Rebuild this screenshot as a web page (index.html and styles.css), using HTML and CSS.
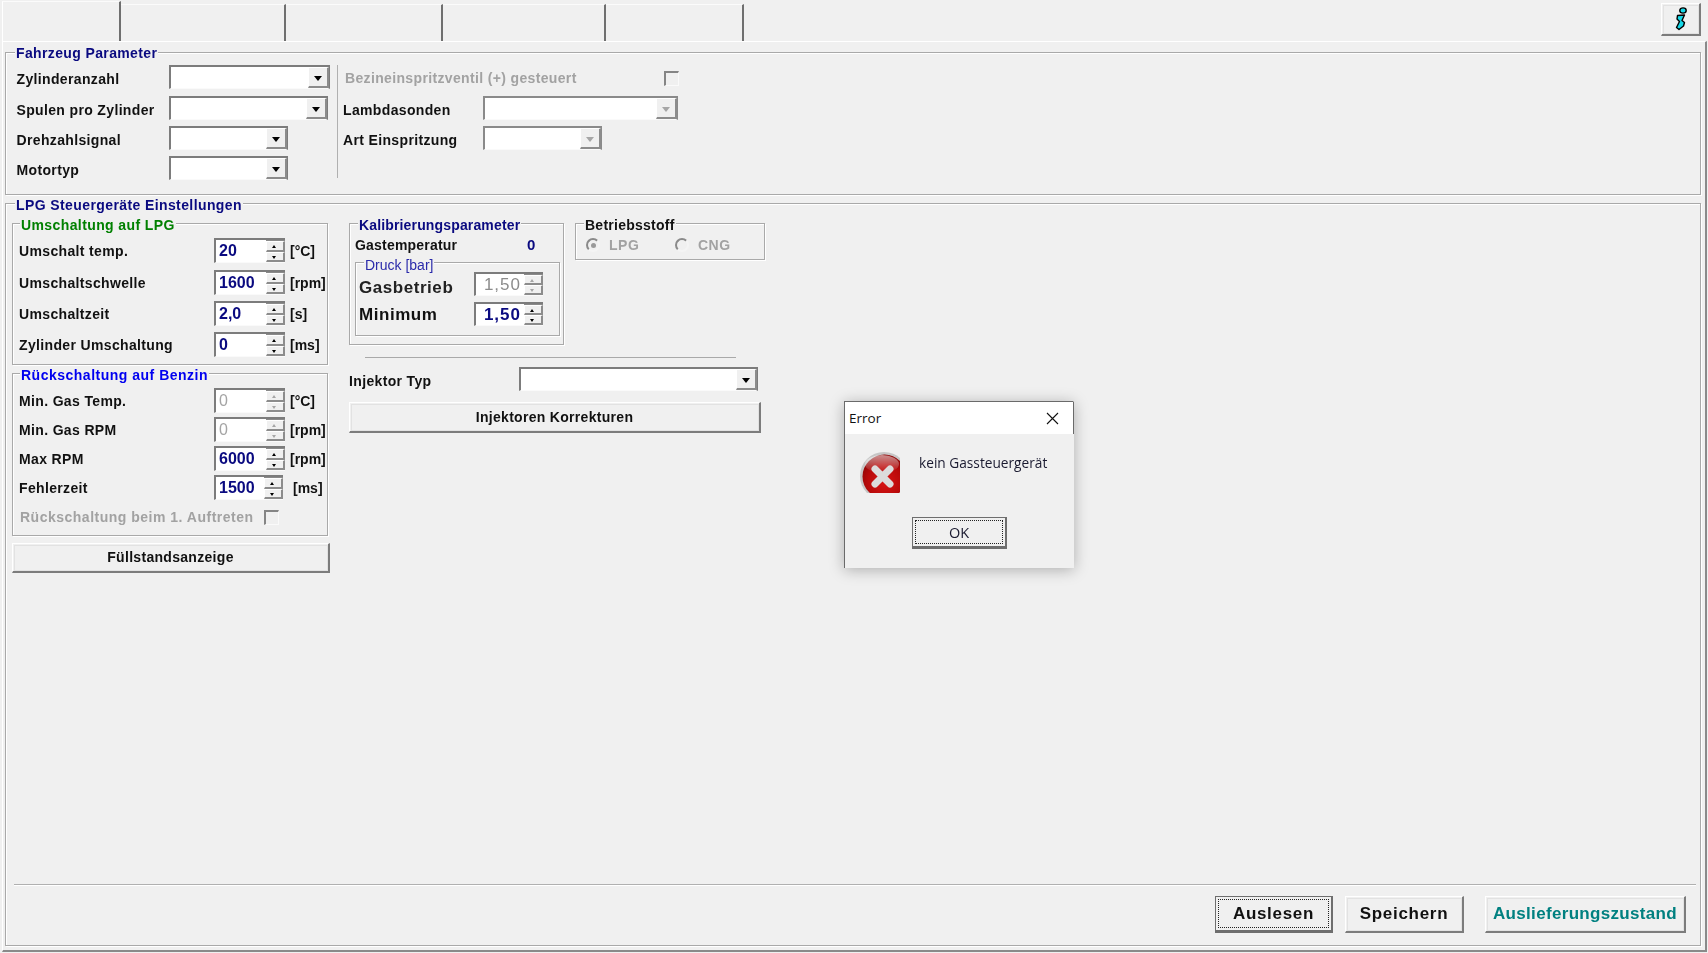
FILE: index.html
```html
<!DOCTYPE html>
<html lang="de">
<head>
<meta charset="utf-8">
<title>LPG Steuergerät</title>
<link rel="stylesheet" href="styles.css">
</head>
<body>
<div class="app">
  <div class="tabbar">
    <div class="tab tab-active tab-w1"></div>
    <div class="tab tab-w2"></div>
    <div class="tab tab-w3"></div>
    <div class="tab tab-w4"></div>
    <div class="tab tab-w5"></div>
    <button class="btn info-btn" type="button">
      <svg width="14" height="24" viewBox="0 0 14 24"><ellipse cx="9" cy="3.5" rx="3.2" ry="2.6" fill="#16d8e8" stroke="#000" stroke-width="1.4"/><path d="M3.5 8.5 L10.5 8 L8 13.5 L10.5 15.5 L9.5 19 L5 22.5 L2.5 20.5 L5.5 14.5 L3 12 Z" fill="#16d8e8" stroke="#000" stroke-width="1.4" stroke-linejoin="round"/></svg>
    </button>
  </div>

  <div class="page">
    <section class="group vehicle">
      <h2 class="legend legend-navy legend-main">Fahrzeug Parameter</h2>
      <div class="vehicle-left">
        <div class="row row-v"><span class="lbl lbl-v">Zylinderanzahl</span><div class="combo w161"><span class="arrow"></span></div></div>
        <div class="row row-v"><span class="lbl lbl-v">Spulen pro Zylinder</span><div class="combo w159"><span class="arrow"></span></div></div>
        <div class="row row-v"><span class="lbl lbl-v">Drehzahlsignal</span><div class="combo w119"><span class="arrow"></span></div></div>
        <div class="row row-v"><span class="lbl lbl-v">Motortyp</span><div class="combo w119"><span class="arrow"></span></div></div>
      </div>
      <div class="vehicle-right">
        <div class="row row-v"><span class="lbl lbl-benz off">Bezineinspritzventil (+) gesteuert</span><span class="check check-benz"></span></div>
        <div class="row row-v"><span class="lbl lbl-r">Lambdasonden</span><div class="combo w195 disabled"><span class="arrow"></span></div></div>
        <div class="row row-v"><span class="lbl lbl-r">Art Einspritzung</span><div class="combo w119 disabled"><span class="arrow"></span></div></div>
      </div>
    </section>

    <section class="group lpg">
      <h2 class="legend legend-navy legend-lpg">LPG Steuergeräte Einstellungen</h2>
      <div class="lpg-main">
        <div class="col-left">
          <section class="group box-a">
            <h3 class="legend legend-sub legend-green">Umschaltung auf LPG</h3>
            <div class="row row-s r32"><span class="lbl lbl-s">Umschalt temp.</span><div class="spin"><span class="val">20</span><span class="ud"><i class="up"></i><i class="dn"></i></span></div><span class="unit">[°C]</span></div>
            <div class="row row-s r31"><span class="lbl lbl-s">Umschaltschwelle</span><div class="spin"><span class="val">1600</span><span class="ud"><i class="up"></i><i class="dn"></i></span></div><span class="unit">[rpm]</span></div>
            <div class="row row-s r31"><span class="lbl lbl-s">Umschaltzeit</span><div class="spin"><span class="val">2,0</span><span class="ud"><i class="up"></i><i class="dn"></i></span></div><span class="unit">[s]</span></div>
            <div class="row row-s"><span class="lbl lbl-s">Zylinder Umschaltung</span><div class="spin"><span class="val">0</span><span class="ud"><i class="up"></i><i class="dn"></i></span></div><span class="unit">[ms]</span></div>
          </section>
          <section class="group box-b">
            <h3 class="legend legend-sub legend-blue">Rückschaltung auf Benzin</h3>
            <div class="row row-s r29"><span class="lbl lbl-s">Min. Gas Temp.</span><div class="spin disabled"><span class="val">0</span><span class="ud"><i class="up"></i><i class="dn"></i></span></div><span class="unit">[°C]</span></div>
            <div class="row row-s r29"><span class="lbl lbl-s">Min. Gas RPM</span><div class="spin disabled"><span class="val">0</span><span class="ud"><i class="up"></i><i class="dn"></i></span></div><span class="unit">[rpm]</span></div>
            <div class="row row-s r29"><span class="lbl lbl-s">Max RPM</span><div class="spin"><span class="val">6000</span><span class="ud"><i class="up"></i><i class="dn"></i></span></div><span class="unit">[rpm]</span></div>
            <div class="row row-s"><span class="lbl lbl-s">Fehlerzeit</span><div class="spin spin-narrow"><span class="val">1500</span><span class="ud"><i class="up"></i><i class="dn"></i></span></div><span class="unit unit-far">[ms]</span></div>
            <div class="row row-check"><span class="lbl lbl-c off">Rückschaltung beim 1. Auftreten</span><span class="check"></span></div>
          </section>
          <button class="btn wide-btn fill-btn" type="button">Füllstandsanzeige</button>
        </div>

        <div class="col-mid">
          <div class="mid-top">
            <section class="group box-k">
              <h3 class="legend legend-sub legend-navy legend-k">Kalibrierungsparameter</h3>
              <div class="gas-row"><span class="lbl">Gastemperatur</span><span class="gas-val">0</span></div>
              <section class="group box-d">
                <h4 class="legend legend-thin">Druck [bar]</h4>
                <div class="row row-d"><span class="lbl lbl-d lbl-semi">Gasbetrieb</span><div class="spin spin-d disabled"><span class="val">1,50</span><span class="ud"><i class="up"></i><i class="dn"></i></span></div></div>
                <div class="row row-d"><span class="lbl lbl-d">Minimum</span><div class="spin spin-d"><span class="val">1,50</span><span class="ud"><i class="up"></i><i class="dn"></i></span></div></div>
              </section>
            </section>
            <section class="group box-f">
              <h3 class="legend legend-sub legend-black legend-k">Betriebsstoff</h3>
              <div class="radios">
                <span class="radio radio-on"></span><span class="radio-lbl off">LPG</span>
                <span class="radio radio-2"></span><span class="radio-lbl off">CNG</span>
              </div>
            </section>
          </div>
          <div class="sep-mid"></div>
          <div class="row inj-row"><span class="lbl lbl-i">Injektor Typ</span><div class="combo w239"><span class="arrow"></span></div></div>
          <button class="btn wide-btn inj-btn" type="button">Injektoren Korrekturen</button>
        </div>
      </div>

      <div class="foot">
        <div class="foot-sep"></div>
        <div class="foot-btns">
          <button class="btn foot-btn btn-default w118" type="button"><span class="focus">Auslesen</span></button>
          <button class="btn foot-btn w119b" type="button">Speichern</button>
          <button class="btn foot-btn w201 teal" type="button">Auslieferungszustand</button>
        </div>
      </div>
    </section>
  </div>

  <div class="dialog" role="dialog">
    <div class="dlg-title">
      <span>Error</span>
      <svg class="dlg-x" width="13" height="13" viewBox="0 0 13 13"><path d="M1 1 L12 12 M12 1 L1 12" stroke="#111" stroke-width="1.1" fill="none"/></svg>
    </div>
    <div class="dlg-body">
      <div class="dlg-msg">
        <svg class="dlg-icon" width="40" height="41" viewBox="0 0 40 41">
          <defs>
            <radialGradient id="redg" cx="50%" cy="62%" r="60%"><stop offset="0" stop-color="#d81616"/><stop offset="0.65" stop-color="#b80a0a"/><stop offset="1" stop-color="#8e0808"/></radialGradient>
            <linearGradient id="shine" x1="0" y1="0" x2="0" y2="1"><stop offset="0" stop-color="#fff" stop-opacity=".55"/><stop offset="1" stop-color="#fff" stop-opacity="0"/></linearGradient>
          </defs>
          <circle cx="24" cy="24" r="24" fill="#c6c6c6"/>
          <circle cx="24.5" cy="24.5" r="22" fill="url(#redg)"/>
          <ellipse cx="22" cy="12" rx="17" ry="9" fill="url(#shine)"/>
          <path d="M15 17 L30 32 M30 17 L15 32" stroke="#dcdcdc" stroke-width="7" stroke-linecap="round"/>
        </svg>
        <span class="dlg-text">kein Gassteuergerät</span>
      </div>
      <button class="btn dlg-ok btn-default" type="button"><span class="focus">OK</span></button>
    </div>
  </div>
</div>
</body>
</html>
```
FILE: styles.css
```css
* { box-sizing: border-box; }
html, body { margin: 0; padding: 0; }
body {
  width: 1708px; height: 953px; overflow: hidden;
  background: #f0f0f0; color: #111;
  font-family: "Liberation Sans", Arial, sans-serif;
  font-size: 14px;
}
.app { position: relative; width: 1708px; height: 953px; padding-left: 2px; filter: blur(0.45px); }

/* tabs */
.tabbar { display: flex; height: 41px; padding-top: 1px; }
.tab { margin-top: 3px; height: 37px; border-top: 1px solid #fbfbfb; border-right: 2px solid #6f6f6f; background: #f0f0f0; }
.tab-active { margin-top: 0; height: 40px; border-left: 1px solid #fff; }
.tab-w1 { width: 119px; }
.tab-w2 { width: 165px; }
.tab-w3 { width: 157px; }
.tab-w4 { width: 163px; }
.tab-w5 { width: 138px; }
.btn {
  display: block; padding: 0; font: inherit; font-weight: bold; color: #111;
  background: #f0f0f0;
  border-style: solid; border-width: 1px 2px 2px 1px;
  border-color: #fff #7c7c7c #7c7c7c #fff;
  outline: 1px solid #e2e2e2; outline-offset: -3px;
  letter-spacing: .3px;
}
.info-btn { margin: 2px 7px 0 auto; width: 40px; height: 33px; display: flex; align-items: center; justify-content: center; }

/* page */
.page {
  display: flex; flex-direction: column;
  width: 1705px; height: 911px;
  border-style: solid; border-width: 1px 2px 2px 1px; border-color: #fff #8a8a8a #8a8a8a #fff;
  padding: 10px 4px 4px 2px;
}
.group { position: relative; border: 1px solid #a9a9a9; box-shadow: 1px 1px 0 #fff, inset 1px 1px 0 #fff; }
.legend {
  position: absolute; top: -6px; left: 9px; margin: 0; padding: 0 1px;
  background: #f0f0f0; font-size: 14px; line-height: 15px; font-weight: bold; letter-spacing: .4px; white-space: nowrap;
}
.legend-main { top: -7px; letter-spacing: .37px; }
.legend-lpg { letter-spacing: .4px; }
.legend-navy { color: #0a0a80; }
.legend-green { color: #008000; }
.legend-blue { color: #0000f0; letter-spacing: .5px; }
.legend-black { color: #111; }
.legend-thin { left: 8px; top: -5px; font-weight: normal; color: #2a2aaa; letter-spacing: 0; }
.legend-sub { left: 7px; }
.legend-k { left: 8px; letter-spacing: .15px; }
.box-f .legend-k { letter-spacing: .25px; }

.row { display: flex; align-items: center; }
.lbl { font-weight: bold; letter-spacing: .35px; white-space: nowrap; display: block; }
.off { color: #a2a2a2; }

/* vehicle group */
.vehicle { display: flex; height: 143px; padding: 12px 0 0 10px; flex: none; }
.vehicle-left { width: 321px; display: grid; grid-template-rows: 31px 30px 30px 24px; }
.vehicle-right { height: 113px; border-left: 1px solid #b0b0b0; display: grid; grid-template-rows: 31px 30px 30px; align-content: start; padding-left: 4px; }
.row-v { height: 24px; }
.lbl-v { width: 153px; padding: 4px 0 0 .5px; }
.lbl-r { width: 141px; padding: 3px 0 0 1px; }
.lbl-benz { width: 322px; padding: 2px 0 0 3px; }
.check { display: block; width: 15px; height: 15px; border-style: solid; border-width: 2px 1px 1px 2px; border-color: #858585 #fafafa #fafafa #858585; background: #f0f0f0; }
.check-benz { margin-top: 2px; }

/* combos */
.combo { height: 24px; background: #fff; display: flex; justify-content: flex-end; border-style: solid; border-width: 2px 2px 1px 2px; border-color: #7c7c7c #7c7c7c #fafafa #7c7c7c; }
.arrow { position: relative; display: block; width: 21px; height: 21px; background: #f0f0f0; border-style: solid; border-width: 1px 2px 2px 1px; border-color: #fff #8c8c8c #8c8c8c #fff; margin-right: -1px; }
.arrow::after { content: ""; position: absolute; left: 5px; top: 8px; border-style: solid; border-width: 5px 4.5px 0; border-color: #000 transparent transparent; }
.disabled .arrow::after { border-top-color: #a6a6a6; }
.combo.disabled { border-color: #8a8a8a #8a8a8a #fafafa #8a8a8a; }
.w161 { width: 161px; } .w159 { width: 159px; } .w119 { width: 119px; } .w195 { width: 195px; } .w239 { width: 239px; }

/* lpg group */
.lpg { flex: 1; margin-top: 8px; display: flex; flex-direction: column; }
.lpg-main { flex: 1; display: flex; padding: 19px 0 0 6px; }
.col-left { width: 318px; flex: none; }
.box-a { width: 316px; height: 142px; padding: 14px 0 0 6px; }
.box-b { width: 316px; height: 163px; margin-top: 8px; padding: 14px 0 0 6px; }
.row-s { height: 25px; }
.r32 { margin-bottom: 7px; } .r31 { margin-bottom: 6px; } .r29 { margin-bottom: 4px; }
.lbl-s { width: 195px; }
.spin { display: flex; width: 71px; height: 25px; background: #fff; border-style: solid; border-width: 2px 0 1px 2px; border-color: #7c7c7c transparent #fafafa #7c7c7c; }
.spin-narrow { width: 69px; }
.val { flex: 1; padding-left: 3px; font-size: 16px; line-height: 22px; font-weight: bold; color: #0a0a80; }
.disabled .val { color: #a4a4a4; font-weight: normal; }
.ud { width: 19px; display: flex; flex-direction: column; background: #f0f0f0; border-top: 1px solid #8a8a8a; }
.ud i { position: relative; display: block; flex: 1; border-style: solid; border-width: 1px 2px 2px 1px; border-color: #fff #8c8c8c #8c8c8c #fff; }
.ud i::after { content: ""; position: absolute; left: 5px; top: 3px; border-style: solid; border-color: transparent; }
.up::after { border-width: 0 2.5px 3px; border-bottom-color: #000 !important; }
.dn::after { border-width: 3px 2.5px 0; border-top-color: #000 !important; }
.disabled .up::after { border-bottom-color: #a6a6a6 !important; }
.disabled .dn::after { border-top-color: #a6a6a6 !important; }
.unit { margin-left: 5px; font-weight: bold; letter-spacing: 0; }
.unit-far { margin-left: 10px; }
.row-check { margin-top: 9px; height: 16px; padding-left: 1px; }
.lbl-c { width: 244px; letter-spacing: .5px; }
.wide-btn { text-align: center; }
.fill-btn { width: 318px; height: 30px; margin-top: 7px; padding-bottom: 1px; }

/* middle column */
.col-mid { margin-left: 19px; width: 420px; }
.mid-top { display: flex; align-items: flex-start; gap: 11px; }
.box-k { width: 215px; height: 122px; padding: 13px 0 0 5px; }
.gas-row { display: flex; height: 16px; line-height: 16px; }
.gas-row .lbl { width: 172px; letter-spacing: .2px; }
.gas-val { color: #0a0a80; font-weight: bold; font-size: 15px; }
.box-d { width: 205px; height: 74px; margin-top: 9px; padding: 9px 0 0 3px; }
.row-d { height: 24px; margin-bottom: 6px; }
.lbl-d { width: 115px; font-size: 17px; letter-spacing: .55px; padding-top: 1px; }
.lbl-semi { color: #222; padding-top: 8px; }
.spin-d { width: 69px; height: 24px; }
.spin-d .val { font-size: 17px; letter-spacing: 1px; text-align: right; padding-right: 3px; line-height: 21px; }
.spin-d.disabled .val { color: #8c8c8c; }
.spin-d .ud { width: 19px; }
.box-f { width: 190px; height: 37px; }
.radios { display: flex; align-items: center; height: 36px; padding: 5px 0 0 10px; }
.radio { display: block; width: 14px; height: 14px; border-radius: 50%; border: 2px solid; border-color: #8a8a8a #f4f4f4 #f4f4f4 #8a8a8a; background: #f0f0f0; position: relative; }
.radio-on::after { content: ""; position: absolute; left: 3px; top: 3px; width: 5px; height: 5px; border-radius: 50%; background: #9a9a9a; }
.radio-lbl { margin-left: 9px; font-weight: bold; letter-spacing: .5px; width: 37px; }
.radios .radio-lbl:nth-child(2) { width: 66px; }
.sep-mid { width: 371px; margin: 12px 0 0 16px; border-top: 1px solid #a9a9a9; }
.inj-row { height: 24px; margin-top: 9px; }
.lbl-i { width: 170px; padding-top: 3px; }
.inj-btn { width: 412px; height: 31px; margin-top: 11px; }

/* footer */
.foot { padding: 0 4px 12px 8px; }
.foot-sep { border-top: 1px solid #b0b0b0; box-shadow: 0 1px 0 #fff; }
.foot-btns { display: flex; justify-content: flex-end; margin-top: 11px; height: 37px; padding-right: 10px; }
.foot-btn { height: 37px; font-size: 17px; letter-spacing: .7px; }
.w118 { width: 118px; } .w119b { width: 119px; margin-left: 12px; } .w201 { width: 201px; margin-left: 21px; }
.teal { color: #008080; letter-spacing: .32px; }
.btn-default { border: 1px solid #6e6e6e; border-right-width: 2px; border-bottom-width: 3px; outline: none; padding: 2px; }
.focus { display: flex; align-items: center; justify-content: center; width: 100%; height: 100%; border: 1px dotted #222; }

/* dialog */
.dialog {
  position: absolute; left: 844px; top: 401px; width: 230px; height: 167px;
  background: #f0f0f0; border: 1px solid #6a6a6a; border-bottom: 0; border-right-color: transparent;
  box-shadow: 0 2px 14px rgba(0,0,0,.28);
}
.dlg-title {
  display: flex; align-items: center; justify-content: space-between;
  height: 32px; padding: 0 15px 0 4px; background: #fff; margin-right: -1px;
  border-right: 1px solid #6a6a6a;
  font-family: "Open Sans", sans-serif; font-size: 13.5px; color: #111;
}
.dlg-x { margin-right: -1px; }
.dlg-body { display: flex; flex-direction: column; font-family: "Open Sans", sans-serif; }
.dlg-msg { display: flex; height: 83px; padding: 18px 0 0 15px; }
.dlg-icon { flex: none; }
.dlg-text { margin: 1px 0 0 19px; font-size: 13.7px; line-height: 20px; color: #1a1a30; white-space: nowrap; }
.dlg-ok { width: 95px; height: 32px; margin-left: 67px; font-weight: normal; font-size: 14.5px; letter-spacing: 0; color: #1a1a30; font-family: "Open Sans", sans-serif; }
```
